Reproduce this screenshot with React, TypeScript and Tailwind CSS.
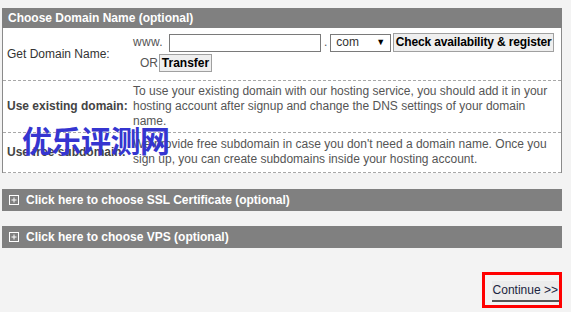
import React from "react";

function Plus() {
  return (
    <svg width="10" height="10" viewBox="0 0 10 10" className="shrink-0">
      <rect x="0.5" y="0.5" width="9" height="9" fill="none" stroke="#ffffff" strokeWidth="1" />
      <path d="M2.5 5H7.5M5 2.5V7.5" stroke="#ffffff" strokeWidth="1" />
    </svg>
  );
}

function Bar({ text }: { text: string }) {
  return (
    <div className="h-[22px] bg-[#808080] flex items-center pl-[7px] gap-[7px] text-white font-bold text-[12px]">
      <Plus />
      <span>{text}</span>
    </div>
  );
}

export default function App() {
  return (
    <div
      className="w-[571px] h-[312px] bg-[#f3f3f3] relative overflow-hidden text-[12px] leading-[15px]"
      style={{ fontFamily: '"Liberation Sans", Arial, sans-serif' }}
    >
      <div className="pt-[8px] pl-[2px] w-[562px]">
        <div className="bg-white border-l border-r border-[#8a8a8a]">
          <div className="h-[20px] bg-[#808080] -mx-px pl-[6px] flex items-center text-white font-bold">
            Choose Domain Name (optional)
          </div>
          {/* Row 1 */}
          <div className="flex h-[53px] border-b border-dashed border-[#a8a8a8]">
            <div className="w-[130px] shrink-0 pl-[4px] flex items-center text-[#333]">Get Domain Name:</div>
            <div className="pt-[5px] text-[#555]">
              <div className="flex items-center h-[19px]">
                <span className="mr-[6px] tracking-[0.3px]">www.</span>
                <div className="w-[152px] h-[18px] border border-[#7a7a7a] bg-white" />
                <span className="mx-[3px]">.</span>
                <div className="w-[61px] h-[18px] border border-[#7a7a7a] bg-white flex items-center justify-between pl-[5px] pr-[5px] text-[#333]">
                  <span>com</span>
                  <span className="text-[9px] text-black">▼</span>
                </div>
                <div className="ml-[2px] h-[19px] w-[161px] border border-[#a0a0a0] bg-[#efefef] flex items-center justify-center font-bold text-black tracking-[-0.15px]">
                  Check availability &amp; register
                </div>
              </div>
              <div className="flex items-center h-[18px] mt-[2px] pl-[7px]">
                <span>OR</span>
                <div className="ml-[1px] h-[18px] w-[53px] border border-[#a0a0a0] bg-[#efefef] flex items-center justify-center font-bold text-black">
                  Transfer
                </div>
              </div>
            </div>
          </div>
          {/* Row 2 */}
          <div className="flex h-[52px] border-b border-dashed border-[#a8a8a8]">
            <div className="w-[130px] shrink-0 pl-[4px] flex items-center font-bold text-[#444]">Use existing domain:</div>
            <div className="pt-[3px] pr-[4px] text-[#555]">
              To use your existing domain with our hosting service, you should add it in your hosting account after signup and change the DNS settings of your domain name.
            </div>
          </div>
          {/* Row 3 */}
          <div className="flex h-[40px] border-b border-dashed border-[#a8a8a8]">
            <div className="w-[130px] shrink-0 pl-[4px] flex items-center font-bold text-[#444]">Use free subdomain:</div>
            <div className="pt-[4px] pr-[4px] text-[#555]">
              We provide free subdomain in case you don't need a domain name. Once you sign up, you can create subdomains inside your hosting account.
            </div>
          </div>
        </div>
        <div className="mt-[16px]">
          <Bar text="Click here to choose SSL Certificate (optional)" />
        </div>
        <div className="mt-[15px]">
          <Bar text="Click here to choose VPS (optional)" />
        </div>
        <div className="flex justify-end mt-[24px]">
          <div className="w-[80px] h-[36px] border-[3px] border-[#ff0000] flex items-start justify-end pt-[6px] pr-0">
            <div className="h-[21px] px-[1px] bg-[#ececec] border-b-2 border-[#555] flex items-center text-[#1b2440] text-[12px]">
              Continue &gt;&gt;
            </div>
          </div>
        </div>
      </div>
      <div
        className="absolute left-[22px] top-[121px] text-[30px] leading-[36px] font-bold text-[#3535d0] tracking-[-0.5px]"
        style={{ fontFamily: '"Noto Sans CJK SC", sans-serif' }}
      >
        优乐评测网
      </div>
    </div>
  );
}
